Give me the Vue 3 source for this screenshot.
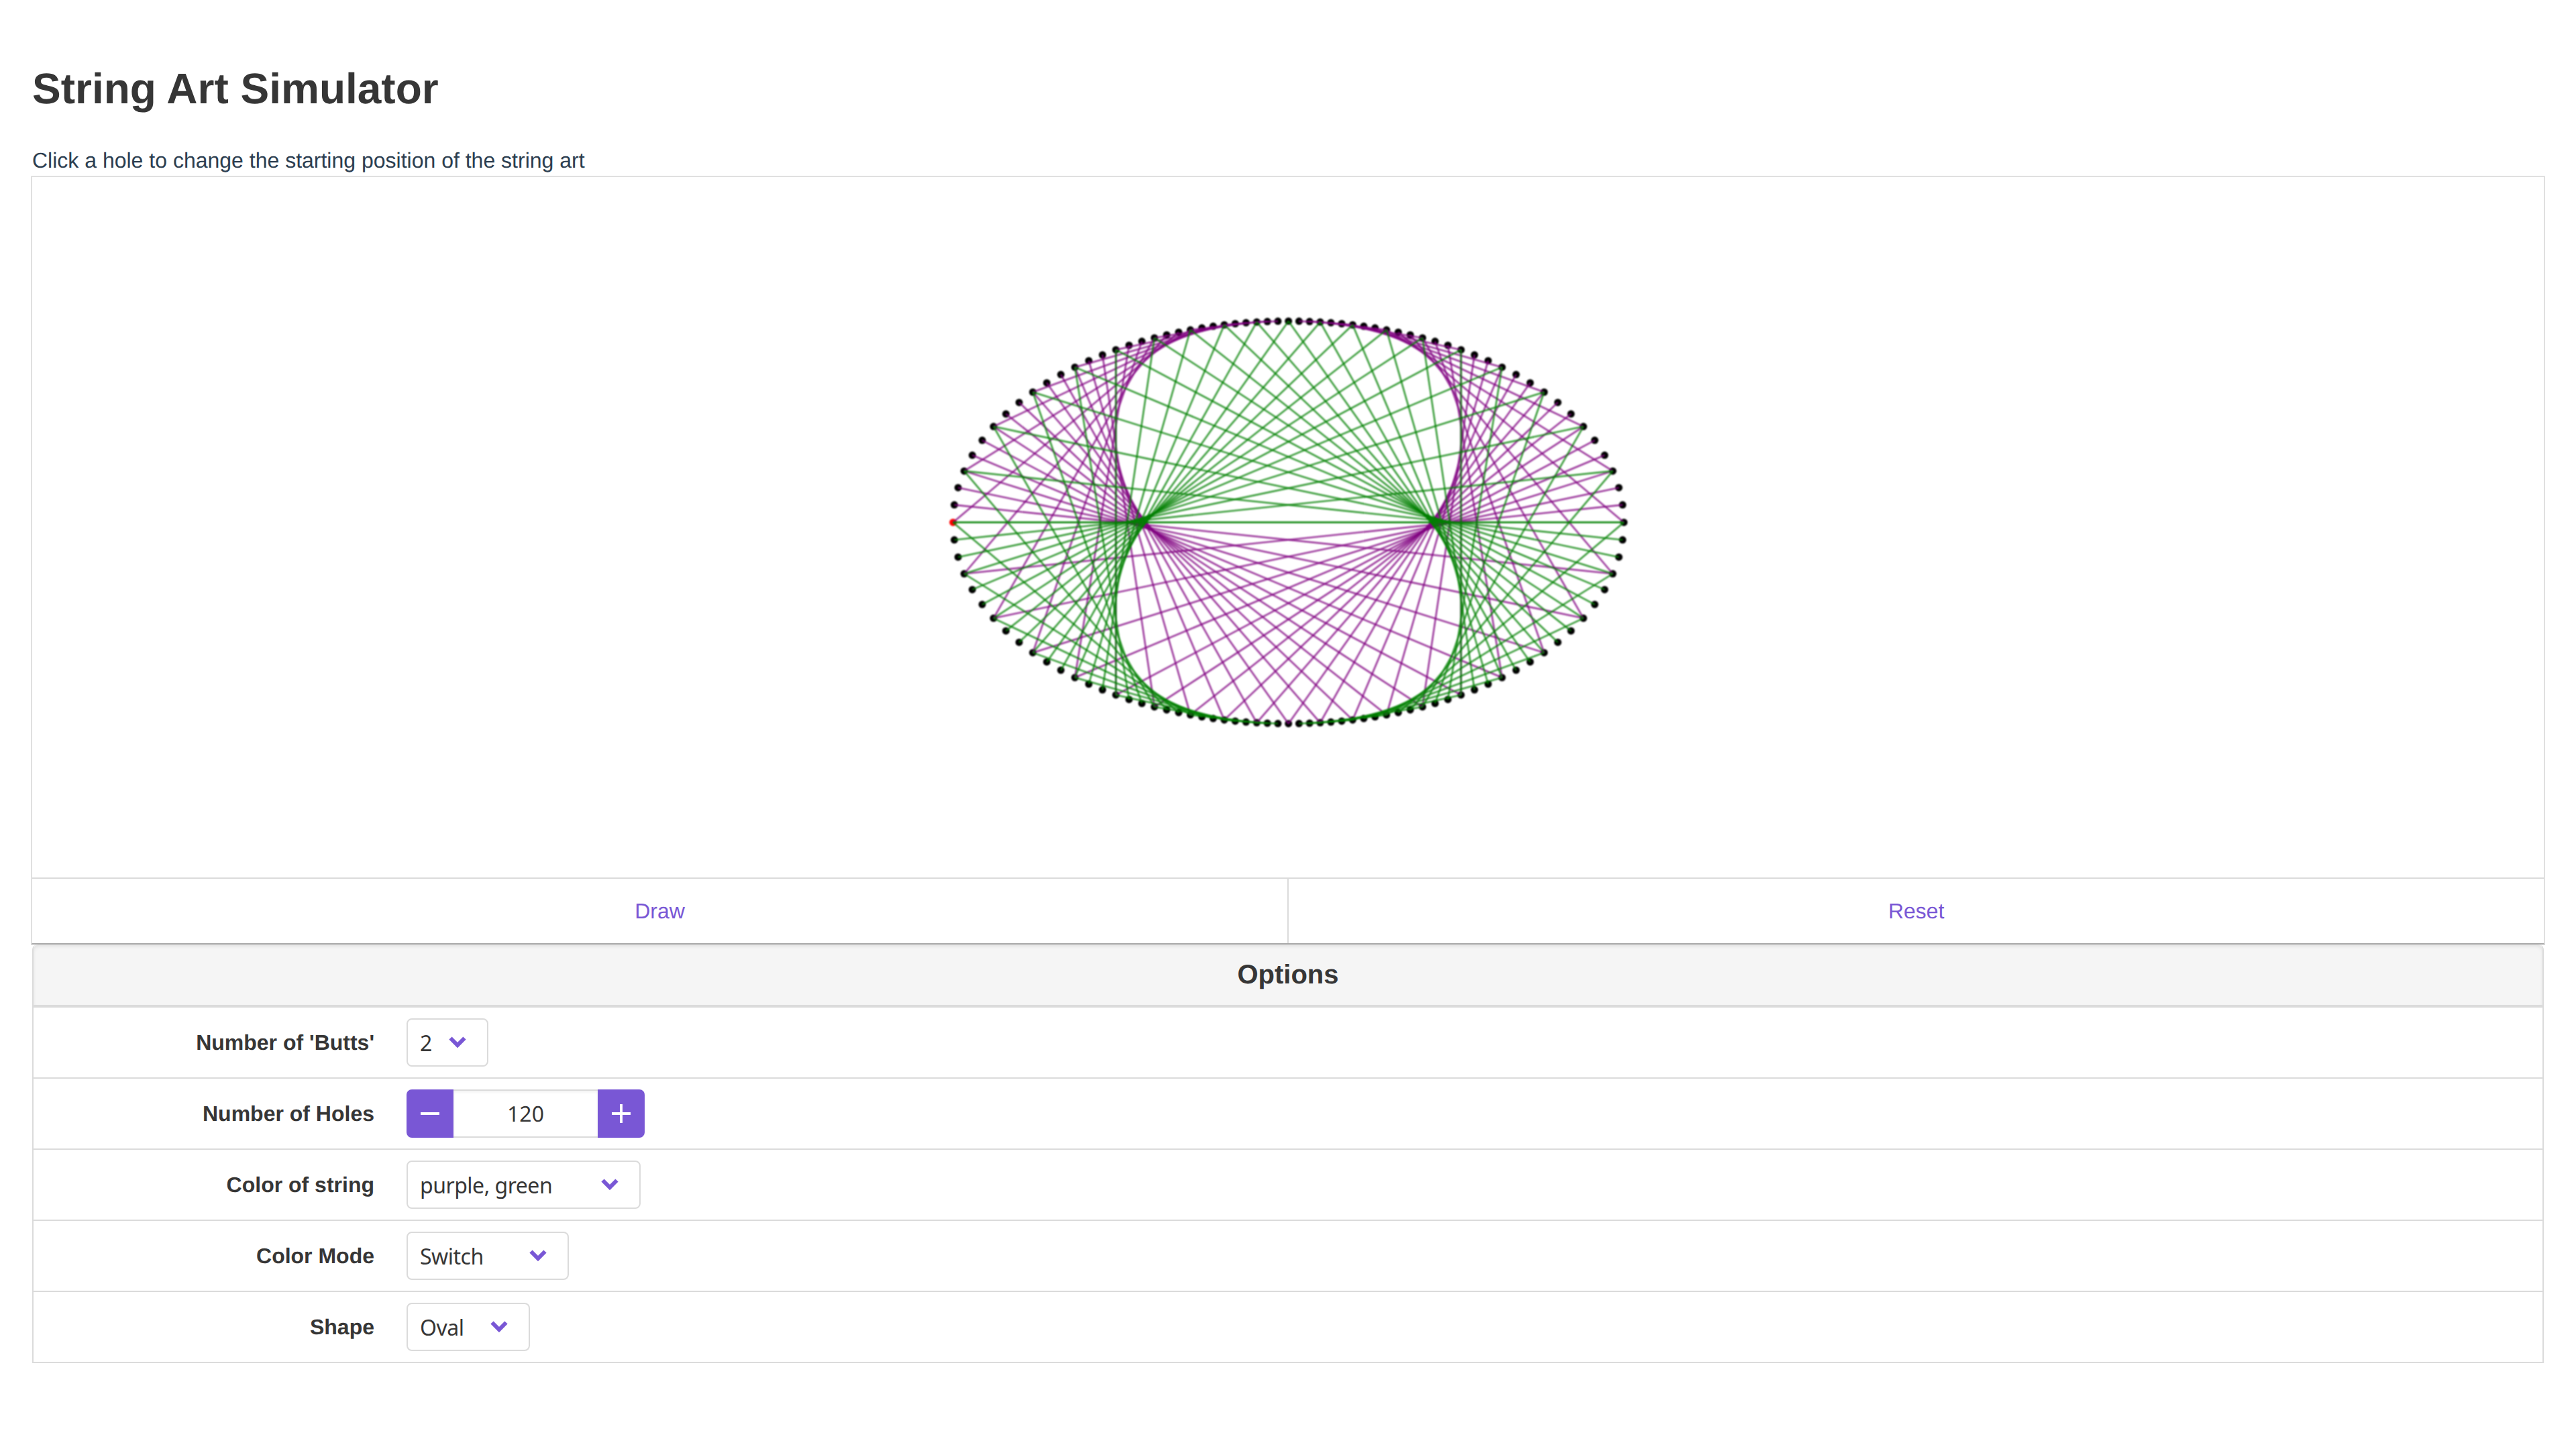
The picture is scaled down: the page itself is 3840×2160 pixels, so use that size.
<script setup>
import { computed, ref } from 'vue';

const butts = ref(2);
const holeCount = ref(120);
const stringColors = ref('purple,green');
const colorMode = ref('Switch');
const shape = ref('Oval');

// ellipse centre inside the svg, in px
const cx = 1872.7;
const cy = 514.7;
const rx = 500;
const ry = 300;

const holes = computed(() => {
    const list = [];
    for (let i = 0; i < holeCount.value; i++) {
        const angle = (i / holeCount.value) * Math.PI * 2;
        const cos = Math.cos(angle);
        const sin = Math.sin(angle);
        let r = Math.min(rx, ry);
        if (shape.value === 'Oval') {
            r = (rx * ry) / Math.sqrt((ry * cos) ** 2 + (rx * sin) ** 2);
        }
        list.push({ x: cx - r * cos, y: cy - r * sin });
    }
    return list;
});

const strings = computed(() => {
    const n = holeCount.value;
    const [first, second] = stringColors.value.split(',');
    return holes.value.map((from, i) => {
        const to = holes.value[((Number(butts.value) + 1) * i + Math.floor(n / 2)) % n];
        const isSecond = i === 0 || i >= n / 2;
        return { id: i, x1: from.x, y1: from.y, x2: to.x, y2: to.y, color: isSecond ? second : first };
    });
});

const changeHoles = (delta) => {
    const next = holeCount.value + delta;
    if (next >= 10) {
        holeCount.value = next;
    }
};
</script>

<template>
    <div class="page">
        <h1 class="title">String Art Simulator</h1>
        <p class="hint">Click a hole to change the starting position of the string art</p>

        <div class="card">
            <svg class="art" width="3744" height="1044" viewBox="0 0 3744 1044">
                <circle
                    v-for="(hole, i) in holes"
                    :key="i"
                    :cx="hole.x"
                    :cy="hole.y"
                    r="5.5"
                    :fill="i === 0 ? 'red' : 'black'"
                />
                <line
                    v-for="s in strings"
                    :key="s.id"
                    :x1="s.x1"
                    :y1="s.y1"
                    :x2="s.x2"
                    :y2="s.y2"
                    :stroke="s.color"
                    stroke-width="2.6"
                    stroke-opacity="0.78"
                />
            </svg>
            <div class="actions">
                <a class="action">Draw</a>
                <a class="action">Reset</a>
            </div>
        </div>

        <div class="options">
            <div class="options-head">Options</div>

            <div class="row">
                <label class="label">Number of 'Butts'</label>
                <div class="select-wrap w-butts">
                    <select v-model="butts">
                        <option :value="2">2</option>
                        <option :value="3">3</option>
                        <option :value="4">4</option>
                    </select>
                    <svg class="chevron" width="26" height="18" viewBox="0 0 26 18">
                        <path d="M2.5 2.5L13 13L23.5 2.5" fill="none" stroke="#7957d5" stroke-width="6" />
                    </svg>
                </div>
            </div>

            <div class="row">
                <label class="label">Number of Holes</label>
                <div class="stepper">
                    <button class="step step-minus" @click="changeHoles(-1)">
                        <svg width="48" height="48" viewBox="0 0 24 24">
                            <path d="M19,13H5V11H19V13Z" fill="#fff" />
                        </svg>
                    </button>
                    <div class="value">{{ holeCount }}</div>
                    <button class="step step-plus" @click="changeHoles(1)">
                        <svg width="48" height="48" viewBox="0 0 24 24">
                            <path d="M19,13H13V19H11V13H5V11H11V5H13V11H19V13Z" fill="#fff" />
                        </svg>
                    </button>
                </div>
            </div>

            <div class="row">
                <label class="label">Color of string</label>
                <div class="select-wrap w-color">
                    <select v-model="stringColors">
                        <option value="purple,green">purple, green</option>
                        <option value="blue,red">blue, red</option>
                    </select>
                    <svg class="chevron" width="26" height="18" viewBox="0 0 26 18">
                        <path d="M2.5 2.5L13 13L23.5 2.5" fill="none" stroke="#7957d5" stroke-width="6" />
                    </svg>
                </div>
            </div>

            <div class="row">
                <label class="label">Color Mode</label>
                <div class="select-wrap w-mode">
                    <select v-model="colorMode">
                        <option>Switch</option>
                        <option>Solid</option>
                    </select>
                    <svg class="chevron" width="26" height="18" viewBox="0 0 26 18">
                        <path d="M2.5 2.5L13 13L23.5 2.5" fill="none" stroke="#7957d5" stroke-width="6" />
                    </svg>
                </div>
            </div>

            <div class="row">
                <label class="label">Shape</label>
                <div class="select-wrap w-shape">
                    <select v-model="shape">
                        <option>Oval</option>
                        <option>Circle</option>
                    </select>
                    <svg class="chevron" width="26" height="18" viewBox="0 0 26 18">
                        <path d="M2.5 2.5L13 13L23.5 2.5" fill="none" stroke="#7957d5" stroke-width="6" />
                    </svg>
                </div>
            </div>
        </div>
    </div>
</template>

<style scoped>
.page {
    padding: 0 48px;
    font-family: "Liberation Sans", Arial, sans-serif;
    font-size: 32px;
    color: #363636;
    text-rendering: geometricPrecision;
}
.title {
    margin: 0 0 49px;
    padding-top: 96px;
    font-size: 64px;
    line-height: 72px;
    font-weight: 700;
}
.hint {
    margin: 0;
    line-height: 45px;
    color: #2c3e50;
}
.card {
    margin: 0 -2px;
    border: 2px solid #e0e0e0;
    border-bottom-color: #a8a8a8;
}
.art {
    display: block;
    filter: blur(0.9px);
}
.actions {
    display: flex;
    height: 96px;
    border-top: 2px solid #dbdbdb;
}
.action {
    flex: 1;
    display: flex;
    align-items: center;
    justify-content: center;
    color: #7957d5;
    cursor: pointer;
}
.action + .action {
    border-left: 2px solid #dbdbdb;
}
.options {
    border: 2px solid #dbdbdb;
    border-top: none;
    border-bottom: none;
    border-radius: 8px 8px 0 0;
}
.options-head {
    height: 90px;
    display: flex;
    align-items: center;
    justify-content: center;
    font-size: 40px;
    font-weight: 700;
    background: #f5f5f5;
    border-bottom: 4px solid #dbdbdb;
    border-radius: 8px 8px 0 0;
    box-shadow: inset 0 3px 5px rgba(10, 10, 10, 0.08);
}
.row {
    display: flex;
    align-items: center;
    height: 104px;
    border-bottom: 2px solid #dbdbdb;
}
.label {
    width: 508px;
    text-align: right;
    margin-right: 48px;
    font-weight: 700;
}
.select-wrap {
    position: relative;
    height: 72px;
}
.w-butts { width: 122px; }
.w-color { width: 349px; }
.w-mode { width: 242px; }
.w-shape { width: 184px; }
select {
    display: block;
    width: 100%;
    height: 72px;
    padding: 0 0 0 18px;
    border: 2px solid #dbdbdb;
    border-radius: 8px;
    background: #fff;
    appearance: none;
    font-family: "Noto Sans", sans-serif;
    font-size: 32px;
    letter-spacing: -0.5px;
    color: #363636;
}
.chevron {
    position: absolute;
    right: 33px;
    top: 27px;
    pointer-events: none;
}
.stepper {
    display: flex;
    height: 72px;
    width: 355px;
}
.step {
    width: 70px;
    height: 72px;
    padding: 0;
    border: none;
    background: #7957d5;
    display: flex;
    align-items: center;
    justify-content: center;
    cursor: pointer;
}
.step-minus {
    border-radius: 8px 0 0 8px;
}
.step-plus {
    border-radius: 0 8px 8px 0;
}
.value {
    flex: 1;
    display: flex;
    align-items: center;
    justify-content: center;
    border-top: 2px solid #dbdbdb;
    border-bottom: 2px solid #dbdbdb;
    box-shadow: inset 0 2px 4px rgba(10, 10, 10, 0.06);
    font-family: "Noto Sans", sans-serif;
    color: #363636;
}
</style>
